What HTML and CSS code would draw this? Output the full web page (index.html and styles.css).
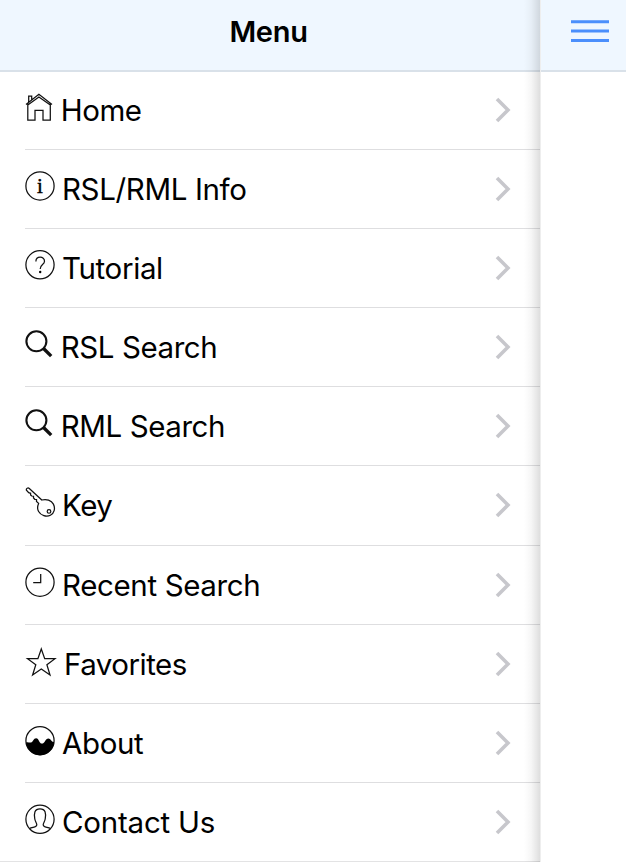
FILE: index.html
```html
<!DOCTYPE html>
<html lang="en">
<head>
<meta charset="utf-8">
<title>Menu</title>
<link rel="stylesheet" href="styles.css">
</head>
<body>
<div class="app">
  <aside class="menu">
    <header class="bar title-bar"><h1>Menu</h1></header>
    <nav class="list">
      <a class="item home"><svg class="icon" viewBox="0 0 32 32"><path d="M2 13.4 14.9 3.2 28 13.4M3.8 12.4V29H11V19.3H19V29H26.3V12.4M3.8 13.9 14.9 5.9 26.3 13.9M4.7 11V5.2H7.7V8.4"/></svg><span class="label">Home</span><svg class="chevron" viewBox="0 0 16 26"><path d="m2 2 11 11L2 24"/></svg></a>
      <a class="item info"><svg class="icon" viewBox="0 0 32 32"><circle cx="16" cy="15.9" r="14.1"/><text class="serif" x="16" y="22.5">i</text></svg><span class="label">RSL/RML Info</span><svg class="chevron" viewBox="0 0 16 26"><path d="m2 2 11 11L2 24"/></svg></a>
      <a class="item tutorial"><svg class="icon" viewBox="0 0 32 32"><circle cx="16" cy="15.8" r="14.1"/><path d="M11.9 12.6C11.9 6.6 20.6 7 20.5 12.2C20.4 15.8 16.2 15.4 16.2 20"/><circle class="dot" cx="16.2" cy="23" r="1.2"/></svg><span class="label">Tutorial</span><svg class="chevron" viewBox="0 0 16 26"><path d="m2 2 11 11L2 24"/></svg></a>
      <a class="item rsl"><svg class="icon" viewBox="0 0 32 32"><circle class="medium" cx="12.4" cy="13.3" r="10"/><path class="thick" d="m19.3 20.3 7.9 7.8"/></svg><span class="label">RSL Search</span><svg class="chevron" viewBox="0 0 16 26"><path d="m2 2 11 11L2 24"/></svg></a>
      <a class="item rml"><svg class="icon" viewBox="0 0 32 32"><circle class="medium" cx="12.4" cy="13.3" r="10"/><path class="thick" d="m19.3 20.3 7.9 7.8"/></svg><span class="label">RML Search</span><svg class="chevron" viewBox="0 0 16 26"><path d="m2 2 11 11L2 24"/></svg></a>
      <a class="item key"><svg class="icon" viewBox="0 0 32 32"><path d="M2.4 4.1C2 2.4 4 1.3 5.3 2.5L17.8 14C22.4 12.7 27.4 14.2 29.4 18.1C31.6 22.5 30.2 27.4 26.4 29.3C22.3 31.3 16.9 29.5 14.6 25.5C13.2 23 13.5 20 14.6 17.4L12.5 15.4V13.5L10.8 13.3 9.5 12V10.2L7.7 10 6.6 8.9V7.3L4.7 6.7Z"/><circle cx="25" cy="25.4" r="1.8"/></svg><span class="label">Key</span><svg class="chevron" viewBox="0 0 16 26"><path d="m2 2 11 11L2 24"/></svg></a>
      <a class="item recent"><svg class="icon" viewBox="0 0 32 32"><circle cx="16" cy="16.2" r="14.1"/><path d="M16.7 8V16.7H9.2"/></svg><span class="label">Recent Search</span><svg class="chevron" viewBox="0 0 16 26"><path d="m2 2 11 11L2 24"/></svg></a>
      <a class="item favorites"><svg class="icon" viewBox="0 0 32 32"><path d="M17.3 4 20.7 13.7H31L22.9 19.8 26 30 17.3 24 8.6 30 11.8 19.8 3.5 13.7H13.9Z"/></svg><span class="label">Favorites</span><svg class="chevron" viewBox="0 0 16 26"><path d="m2 2 11 11L2 24"/></svg></a>
      <a class="item about"><svg class="icon" viewBox="0 0 32 32"><circle cx="16" cy="16.7" r="14.1"/><path class="solid" d="M2 18.6C4 17.5 5 19 7 18.5C9 18 9.5 14.2 12.1 14.2C15.1 14.2 15 19.6 18 19.6C21 19.6 21.3 14.5 24.4 14.5C26.8 14.5 27.5 18.5 30.1 17.9A14.1 14.1 0 0 1 2 18.6Z"/></svg><span class="label">About</span><svg class="chevron" viewBox="0 0 16 26"><path d="m2 2 11 11L2 24"/></svg></a>
      <a class="item contact"><svg class="icon" viewBox="0 0 32 32"><circle cx="16" cy="16.3" r="14.1"/><path d="M5.5 25.6C8 23.8 12.8 24.8 12.8 21.8C12.8 20 11.3 18.7 10.8 16C9.8 10.2 10.5 5.8 16 5.8C21.5 5.8 22.2 10.2 21.2 16C20.7 18.7 19.2 20 19.2 21.8C19.2 24.8 24 23.8 26.5 25.6"/></svg><span class="label">Contact Us</span><svg class="chevron" viewBox="0 0 16 26"><path d="m2 2 11 11L2 24"/></svg></a>
    </nav>
  </aside>
  <main class="content">
    <header class="bar tool-bar"><svg class="burger" viewBox="0 0 38 24"><path d="M0 2.8H38M0 12H38M0 21.4H38"/></svg></header>
  </main>
</div>
</body>
</html>
```

FILE: styles.css
```css
* { box-sizing: border-box; }
body { margin: 0; background: #fff; color: #000; font-family: Inter, sans-serif; overflow: hidden; }
.app { display: flex; width: 626px; height: 862px; }
.menu { position: relative; width: 540px; }
.menu::after { content: ""; position: absolute; inset: 0 0 0 auto; width: 16px; background: linear-gradient(90deg, rgba(0,0,0,0), rgba(0,0,0,.035) 45%, rgba(0,0,0,.13)); }
.content { flex: 1; border-left: 1px solid #eee; }
.bar { height: 72px; background: #eff7ff; border-bottom: 2px solid #d9e1e9; display: flex; }
.title-bar { justify-content: center; }
.tool-bar { padding: 19px 0 0 30px; }
h1 { margin: 14px 3px 0 0; font-size: 29px; line-height: 36px; font-weight: 600; letter-spacing: -.3px; }
.list { height: 791.5px; margin-top: -1.5px; padding-left: 25px; display: grid; grid-template-rows: repeat(9, 79.2px) 1fr; border-bottom: 1px solid #e3e3e4; }
.item { display: flex; align-items: flex-start; border-bottom: 1px solid #dedee0; min-height: 0; }
.item:last-child { border-bottom: 0; }
.icon { width: 32px; height: 32px; margin: 20px 6px 0 -1px; flex: none; overflow: visible; fill: none; stroke: #111; stroke-width: 1.25; }
.home .icon, .rsl .icon, .rml .icon { margin-right: 4.8px; }
.favorites .icon { margin-right: 8px; }
.icon .medium { stroke-width: 2.1; }
.icon .thick { stroke-width: 3.4; }
.icon .solid, .icon .dot { fill: #000; stroke: none; }
.icon .serif { font: 21px "Liberation Serif", serif; text-anchor: middle; fill: #000; stroke: #000; stroke-width: .4; }
.label { font-size: 29.5px; line-height: 38px; margin-top: 20px; white-space: nowrap; letter-spacing: -.5px; }
.info .label, .tutorial .label, .recent .label, .about .label { letter-spacing: -.36px; }
.rsl .label, .rml .label { letter-spacing: -.43px; }
.contact .label { letter-spacing: -.22px; }
.chevron { width: 16px; height: 26px; margin: 26px 29.5px 0 auto; flex: none; fill: none; stroke: #c7c7cc; stroke-width: 3.6; }
.burger { width: 38px; height: 24px; fill: none; stroke: #4b8ffc; stroke-width: 3; }
```
